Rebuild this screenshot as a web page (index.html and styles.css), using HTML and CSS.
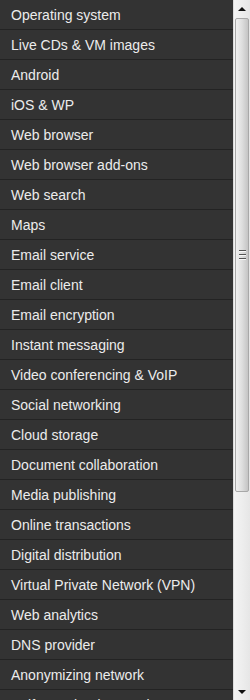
FILE: index.html
```html
<!DOCTYPE html>
<html lang="en">
<head>
    <meta charset="UTF-8">
    <meta name="viewport" content="width=device-width, initial-scale=1.0">
    <title>Categories</title>
    <link rel="stylesheet" href="styles.css">
</head>
<body>
    <div class="panel">
        <ul class="menu">
            <li>Operating system</li>
            <li>Live CDs &amp; VM images</li>
            <li>Android</li>
            <li>iOS &amp; WP</li>
            <li>Web browser</li>
            <li>Web browser add-ons</li>
            <li>Web search</li>
            <li>Maps</li>
            <li>Email service</li>
            <li>Email client</li>
            <li>Email encryption</li>
            <li>Instant messaging</li>
            <li>Video conferencing &amp; VoIP</li>
            <li>Social networking</li>
            <li>Cloud storage</li>
            <li>Document collaboration</li>
            <li>Media publishing</li>
            <li>Online transactions</li>
            <li>Digital distribution</li>
            <li>Virtual Private Network (VPN)</li>
            <li>Web analytics</li>
            <li>DNS provider</li>
            <li>Anonymizing network</li>
            <li>Self-contained networks</li>
        </ul>

        <div class="scrollbar">
            <div class="sb-btn"><span class="arrow-up"></span></div>
            <div class="sb-thumb">
                <div class="grip"></div>
                <div class="grip"></div>
                <div class="grip"></div>
            </div>
            <div class="sb-track"></div>
            <div class="sb-btn"><span class="arrow-down"></span></div>
        </div>
    </div>
</body>
</html>
```

FILE: styles.css
```css
html, body {
    margin: 0;
    padding: 0;
    height: 700px;
    overflow: hidden;
    background: #333;
}
.panel {
    display: flex;
    height: 700px;
}
.menu {
    flex: 1;
    margin: 0;
    padding: 0;
    list-style: none;
    overflow: hidden;
    font-family: 'Liberation Sans', Arial, sans-serif;
    font-size: 14px;
    color: #ececec;
}
.menu li {
    height: 29px;
    line-height: 31px;
    padding-left: 11px;
    background: #333;
    border-bottom: 1px solid #232323;
    white-space: nowrap;
    overflow: hidden;
}
.scrollbar {
    width: 16px;
    display: flex;
    flex-direction: column;
    background: linear-gradient(to right, #f4f4f4, #ececec 60%, #e6e6e6);
    border-left: 1px solid #dcdcdc;
}
.sb-btn {
    height: 17px;
    display: flex;
    align-items: center;
    justify-content: center;
}
.arrow-up {
    width: 0;
    height: 0;
    border-left: 4px solid transparent;
    border-right: 4px solid transparent;
    border-bottom: 4px solid #111;
    margin-top: 1px;
}
.arrow-down {
    width: 0;
    height: 0;
    border-left: 4px solid transparent;
    border-right: 4px solid transparent;
    border-top: 4px solid #111;
    margin-top: 1px;
}
.sb-thumb {
    height: 474px;
    margin: 1px 1px 0 1px;
    border: 1px solid #a8a8a8;
    border-radius: 2px;
    background: linear-gradient(to right, #f0f0f0, #dedede 50%, #c4c4c4);
    display: flex;
    flex-direction: column;
    align-items: center;
    justify-content: center;
    gap: 2px;
    box-sizing: border-box;
}
.grip {
    width: 7px;
    height: 1px;
    background: #555;
    border-bottom: 1px solid #f8f8f8;
}
.sb-track {
    flex: 1;
}
```
